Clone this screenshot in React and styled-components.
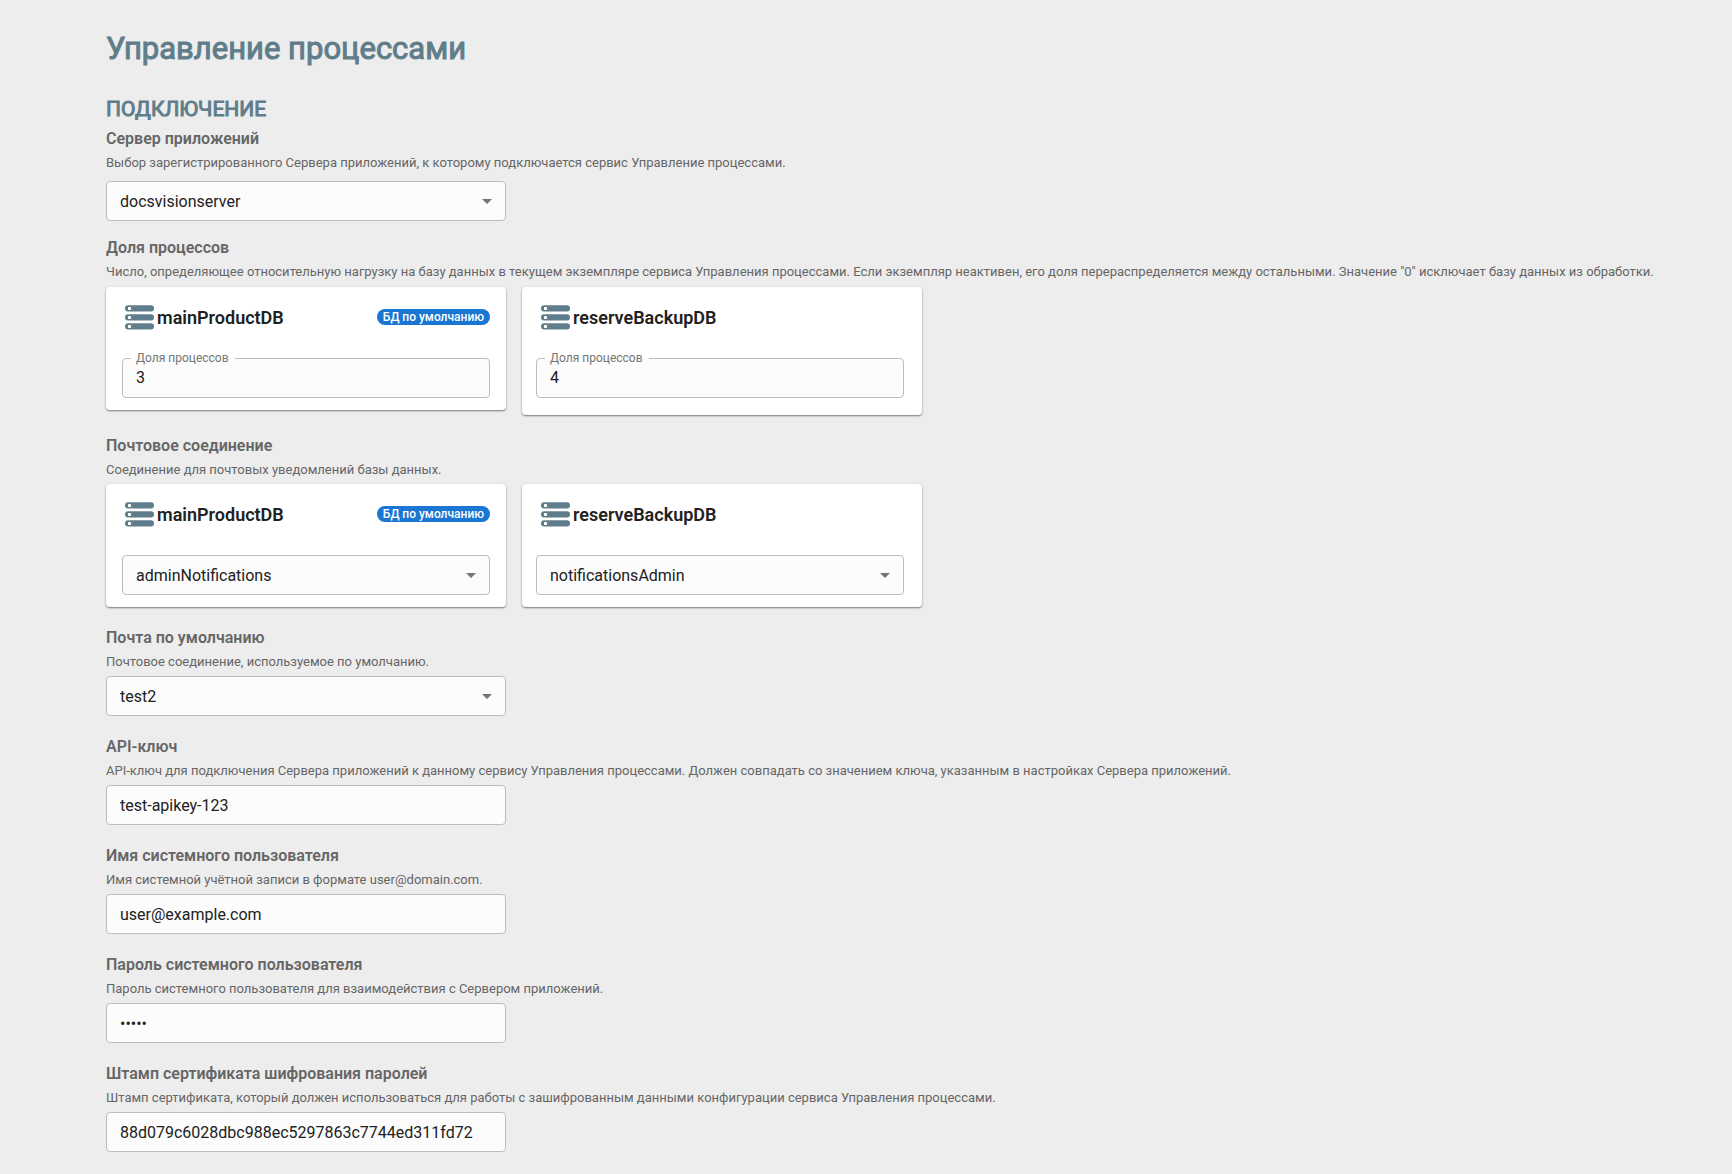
import React, { useState } from "react";
import styled, { createGlobalStyle } from "styled-components";

const GlobalStyle = createGlobalStyle`
  * {
    margin: 0;
    padding: 0;
    box-sizing: border-box;
  }

  body {
    background-color: #ededed;
    color: #212121;
    font-family: Roboto, "Liberation Sans", sans-serif;
    font-size: 16px;
  }
`

const Page = styled.main`
  display: flex;
  flex-direction: column;
  padding: 29px 0 20px 106px;
`
const Title = styled.h1`
  color: #607d8b;
  font-size: 31px;
  font-weight: 400;
  line-height: 40px;
  -webkit-text-stroke: 1px #607d8b;
`
const SectionTitle = styled.h2`
  margin: 26px 0 4px;
  color: #607d8b;
  font-size: 21px;
  font-weight: 400;
  line-height: 28px;
  text-transform: uppercase;
  -webkit-text-stroke: 1px #607d8b;
`
const Group = styled.section`
  margin-bottom: ${props => props.$after || 19}px;
`
const Name = styled.label`
  display: block;
  color: #666;
  font-size: 16px;
  font-weight: 600;
  line-height: 24px;
`
const Hint = styled.p`
  margin-bottom: ${props => props.$after || 2}px;
  color: #666;
  font-size: 13px;
  line-height: 24px;
`
const Input = styled.input`
  display: block;
  width: 100%;
  max-width: 400px;
  height: 40px;
  padding: 0 13px;
  border: 1px solid #bdbdbd;
  border-radius: 4px;
  background-color: #fcfcfc;
  color: #212121;
  font: inherit;
`
const SelectBox = styled.div`
  display: grid;
  align-items: center;
  max-width: 400px;
`
const SelectInput = styled(Input)`
  grid-area: 1 / 1;
  appearance: none;
`
const Arrow = styled.svg`
  grid-area: 1 / 1;
  justify-self: end;
  width: 10px;
  height: 5px;
  margin-right: 14px;
  fill: #757575;
  pointer-events: none;
`
const Cards = styled.div`
  display: flex;
  flex-wrap: wrap;
  align-items: flex-start;
  gap: 16px;
`
const CardBox = styled.article`
  width: 400px;
  padding-bottom: ${props => props.$bottom || 12}px;
  border-radius: 4px;
  background-color: #fff;
  box-shadow: 0 1px 2px rgba(0, 0, 0, 0.5);
`
const CardHeader = styled.header`
  display: flex;
  align-items: center;
  gap: 3px;
  padding: 16px 16px 0 19px;
  height: 44px;
`
const CardTitle = styled.h3`
  font-size: 18px;
  font-weight: 600;
`
const Badge = styled.span`
  margin-left: auto;
  padding: 0 6px;
  border-radius: 8px;
  background-color: #1976d2;
  color: #fff;
  font-size: 12px;
  font-weight: 500;
  line-height: 16px;
`
const CardBody = styled.div`
  padding: ${props => props.$top}px ${props => props.$second ? "18px 0 14px" : "16px 0"};
`
const Outline = styled.fieldset`
  border: 1px solid #bdbdbd;
  border-radius: 4px;
  background-color: #fcfcfc;
`
const Legend = styled.legend`
  margin-left: 8px;
  padding: 0 6px 0 5px;
  color: #757575;
  font-size: 12px;
  line-height: 12px;
`
const ShareInput = styled.input`
  display: block;
  width: 100%;
  height: 33px;
  padding: 0 13px 6px;
  border: none;
  background: transparent;
  color: #212121;
  font: inherit;
`

const DbIcon = () => (
  <svg width="29" height="25" viewBox="0 0 29 25" aria-hidden="true">
    {[0, 9, 18].map(y => (
      <g key={y}>
        <rect x="0" y={y + 0.3} width="29" height="6.2" rx="3" fill="#607d8b" />
        <rect x="3" y={y + 1.9} width="3" height="3" rx="0.6" fill="#fff" />
      </g>
    ))}
  </svg>
)

const Select = ({ value, ...rest }) => (
  <SelectBox>
    <SelectInput as="select" defaultValue={value} {...rest}>
      <option>{value}</option>
    </SelectInput>
    <Arrow viewBox="0 0 10 5" aria-hidden="true"><path d="M0 0h10L5 5z" /></Arrow>
  </SelectBox>
)

const Card = ({ name, main, bottom, top, children }) => (
  <CardBox $bottom={bottom}>
    <CardHeader>
      <DbIcon />
      <CardTitle>{name}</CardTitle>
      {main && <Badge>БД по умолчанию</Badge>}
    </CardHeader>
    <CardBody $top={top} $second={!main}>{children}</CardBody>
  </CardBox>
)

const Share = ({ id, initial }) => {
  const [value, setValue] = useState(initial)

  return (
    <Outline>
      <Legend><label htmlFor={id}>Доля процессов</label></Legend>
      <ShareInput id={id} value={value} onChange={e => setValue(e.target.value)} />
    </Outline>
  )
}

const fields = [
  {
    id: "apikey",
    name: "API-ключ",
    hint: "API-ключ для подключения Сервера приложений к данному сервису Управления процессами. Должен совпадать со значением ключа, указанным в настройках Сервера приложений.",
    value: "test-apikey-123"
  },
  {
    id: "user",
    name: "Имя системного пользователя",
    hint: "Имя системной учётной записи в формате user@domain.com.",
    value: "user@example.com"
  },
  {
    id: "password",
    name: "Пароль системного пользователя",
    hint: "Пароль системного пользователя для взаимодействия с Сервером приложений.",
    value: "admin",
    type: "password"
  },
  {
    id: "stamp",
    name: "Штамп сертификата шифрования паролей",
    hint: "Штамп сертификата, который должен использоваться для работы с зашифрованным данными конфигурации сервиса Управления процессами.",
    value: "88d079c6028dbc988ec5297863c7744ed311fd72"
  }
]

export default function App() {
  return (
    <>
      <GlobalStyle />
      <Page>
        <Title>Управление процессами</Title>
        <SectionTitle>Подключение</SectionTitle>

        <Group $after={15}>
          <Name htmlFor="server">Сервер приложений</Name>
          <Hint $after={6}>Выбор зарегистрированного Сервера приложений, к которому подключается сервис Управление процессами.</Hint>
          <Select id="server" value="docsvisionserver" />
        </Group>

        <Group>
          <Name as="h3">Доля процессов</Name>
          <Hint $after={3}>Число, определяющее относительную нагрузку на базу данных в текущем экземпляре сервиса Управления процессами. Если экземпляр неактивен, его доля перераспределяется между остальными. Значение "0" исключает базу данных из обработки.</Hint>
          <Cards>
            <Card name="mainProductDB" main top={21}>
              <Share id="share-main" initial="3" />
            </Card>
            <Card name="reserveBackupDB" top={21} bottom={17}>
              <Share id="share-reserve" initial="4" />
            </Card>
          </Cards>
        </Group>

        <Group>
          <Name as="h3">Почтовое соединение</Name>
          <Hint>Соединение для почтовых уведомлений базы данных.</Hint>
          <Cards>
            <Card name="mainProductDB" main top={27}>
              <Select aria-label="mainProductDB" value="adminNotifications" />
            </Card>
            <Card name="reserveBackupDB" top={27}>
              <Select aria-label="reserveBackupDB" value="notificationsAdmin" />
            </Card>
          </Cards>
        </Group>

        <Group>
          <Name htmlFor="mail">Почта по умолчанию</Name>
          <Hint>Почтовое соединение, используемое по умолчанию.</Hint>
          <Select id="mail" value="test2" />
        </Group>

        {fields.map((field, i) => (
          <Group key={field.id} $after={i === fields.length - 1 ? 1 : 19}>
            <Name htmlFor={field.id}>{field.name}</Name>
            <Hint>{field.hint}</Hint>
            <Input id={field.id} type={field.type || "text"} defaultValue={field.value} />
          </Group>
        ))}
      </Page>
    </>
  )
}
